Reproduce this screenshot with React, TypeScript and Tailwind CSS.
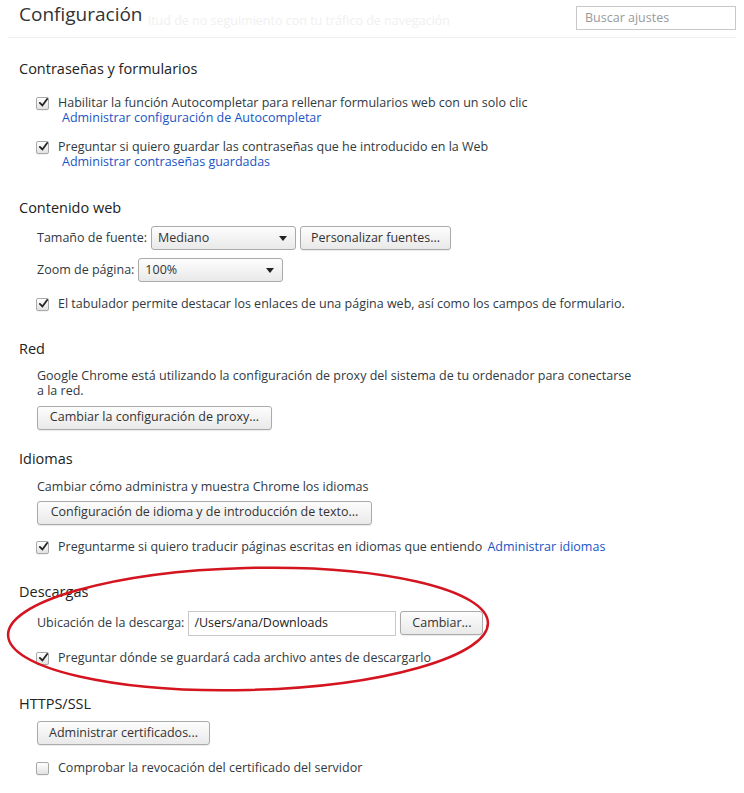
import type {ReactNode} from 'react';

const font = {fontFamily: '"Open Sans", "DejaVu Sans", sans-serif'};

function Check({checked = true}: {checked?: boolean}) {
  return (
    <span className="relative inline-flex h-[13px] w-[13px] shrink-0 items-center justify-center rounded-[2px] border border-[#a9a9a9] bg-gradient-to-b from-white to-[#e2e2e2] shadow-[0_1px_0_rgba(0,0,0,0.05)]">
      {checked ? (
        <svg viewBox="0 0 12 12" className="absolute -top-[1px] left-[1px] h-[11px] w-[11px]">
          <path d="M2 6.5 L4.8 9.2 L10 2.2" fill="none" stroke="#222" strokeWidth="2" strokeLinecap="round" />
        </svg>
      ) : null}
    </span>
  );
}

function Btn({children, className = ''}: {children: ReactNode; className?: string}) {
  return (
    <button className={`h-[24px] whitespace-nowrap rounded-[3px] border border-[#aaa] bg-gradient-to-b from-[#fdfdfd] to-[#e9e9e9] px-[0px] text-[12.5px] text-[#333] shadow-[0_1px_1px_rgba(0,0,0,0.08)] ${className}`}>
      {children}
    </button>
  );
}

function Select({value, className = ''}: {value: string; className?: string}) {
  return (
    <div className={`flex h-[24px] items-center justify-between rounded-[3px] border border-[#aaa] bg-gradient-to-b from-[#fdfdfd] to-[#e9e9e9] pl-[6px] pr-[8px] text-[12.5px] text-[#333] ${className}`}>
      <span>{value}</span>
      <svg viewBox="0 0 8 5" className="h-[5px] w-[8px]">
        <path d="M0 0 L8 0 L4 5 Z" fill="#222" />
      </svg>
    </div>
  );
}

function CheckRow({checked = true, children, link}: {checked?: boolean; children: ReactNode; link?: string}) {
  return (
    <div className="flex items-start gap-[9px] pl-[36px]">
      <div className="pt-[2px]">
        <Check checked={checked} />
      </div>
      <div className="leading-[15px]">
        <div>{children}</div>
        {link ? <a className="block pl-[4px] text-[#1a54c4]">{link}</a> : null}
      </div>
    </div>
  );
}

function Heading({children}: {children: ReactNode}) {
  return <h3 className="pl-[19px] text-[14.5px] leading-[20px] text-[#222]">{children}</h3>;
}

export default function App() {
  return (
    <div className="relative min-h-[793px] w-[744px] overflow-hidden bg-white text-[12.5px] text-[#303942]" style={font}>
      <header className="relative mx-[8px] flex h-[38px] items-start justify-between border-b border-[#eee] pl-[11px]">
        <div className="absolute left-[140px] top-[12px] text-[12.5px] text-[#f0f0f0]">
          itud de no seguimiento con tu tráfico de navegación
        </div>
        <h1 className="relative pt-[1px] text-[19px] leading-[26px] text-[#333]">Configuración</h1>
        <div className="relative mt-[6px] flex h-[24px] w-[160px] items-center border border-[#c8c8c8] px-[8px] text-[12.5px] text-[#999]">
          Buscar ajustes
        </div>
      </header>

      <section className="pt-[21px]">
        <Heading>Contraseñas y formularios</Heading>
        <div className="mt-[16px] space-y-[14px]">
          <CheckRow link="Administrar configuración de Autocompletar">
            Habilitar la función Autocompletar para rellenar formularios web con un solo clic
          </CheckRow>
          <CheckRow link="Administrar contraseñas guardadas">
            Preguntar si quiero guardar las contraseñas que he introducido en la Web
          </CheckRow>
        </div>
      </section>

      <section className="pt-[29px]">
        <Heading>Contenido web</Heading>
        <div className="mt-[8px] flex items-center gap-[4px] pl-[37px]">
          <span>Tamaño de fuente:</span>
          <Select value="Mediano" className="w-[145px]" />
          <Btn className="w-[151px]">Personalizar fuentes...</Btn>
        </div>
        <div className="mt-[8px] flex items-center gap-[4px] pl-[37px]">
          <span>Zoom de página:</span>
          <Select value="100%" className="w-[145px]" />
        </div>
        <div className="mt-[14px]">
          <CheckRow>El tabulador permite destacar los enlaces de una página web, así como los campos de formulario.</CheckRow>
        </div>
      </section>

      <section className="pt-[22px]">
        <Heading>Red</Heading>
        <p className="mt-[9px] w-[640px] pl-[37px] leading-[15px]">
          Google Chrome está utilizando la configuración de proxy del sistema de tu ordenador para conectarse a la red.
        </p>
        <div className="mt-[8px] pl-[37px]">
          <Btn className="w-[235px]">Cambiar la configuración de proxy...</Btn>
        </div>
      </section>

      <section className="pt-[19px]">
        <Heading>Idiomas</Heading>
        <p className="mt-[10px] pl-[37px] leading-[15px]">Cambiar cómo administra y muestra Chrome los idiomas</p>
        <div className="mt-[7px] pl-[37px]">
          <Btn className="w-[335px]">Configuración de idioma y de introducción de texto...</Btn>
        </div>
        <div className="mt-[14px]">
          <CheckRow>
            Preguntarme si quiero traducir páginas escritas en idiomas que entiendo{' '}
            <a className="ml-[2px] text-[#1a54c4]">Administrar idiomas</a>
          </CheckRow>
        </div>
      </section>

      <section className="pt-[22px]">
        <Heading>Descargas</Heading>
        <div className="mt-[9px] flex items-center gap-[4px] pl-[37px]">
          <span>Ubicación de la descarga:</span>
          <div className="flex h-[25px] w-[208px] items-center border border-[#c8c8c8] bg-white px-[5px] text-[#222]">/Users/ana/Downloads</div>
          <Btn className="w-[83px]">Cambiar...</Btn>
        </div>
        <div className="mt-[14px]">
          <CheckRow>Preguntar dónde se guardará cada archivo antes de descargarlo</CheckRow>
        </div>
      </section>

      <section className="pt-[24px]">
        <Heading>HTTPS/SSL</Heading>
        <div className="mt-[7px] pl-[37px]">
          <Btn className="w-[173px]">Administrar certificados...</Btn>
        </div>
        <div className="mt-[15px]">
          <CheckRow checked={false}>Comprobar la revocación del certificado del servidor</CheckRow>
        </div>
      </section>

      <svg className="pointer-events-none absolute left-0 top-0" width="744" height="793" viewBox="0 0 744 793">
        <ellipse cx="248" cy="629" rx="240" ry="61" fill="none" stroke="#d4141f" strokeWidth="2.5" transform="rotate(-1.5 248 629)" />
      </svg>
    </div>
  );
}
